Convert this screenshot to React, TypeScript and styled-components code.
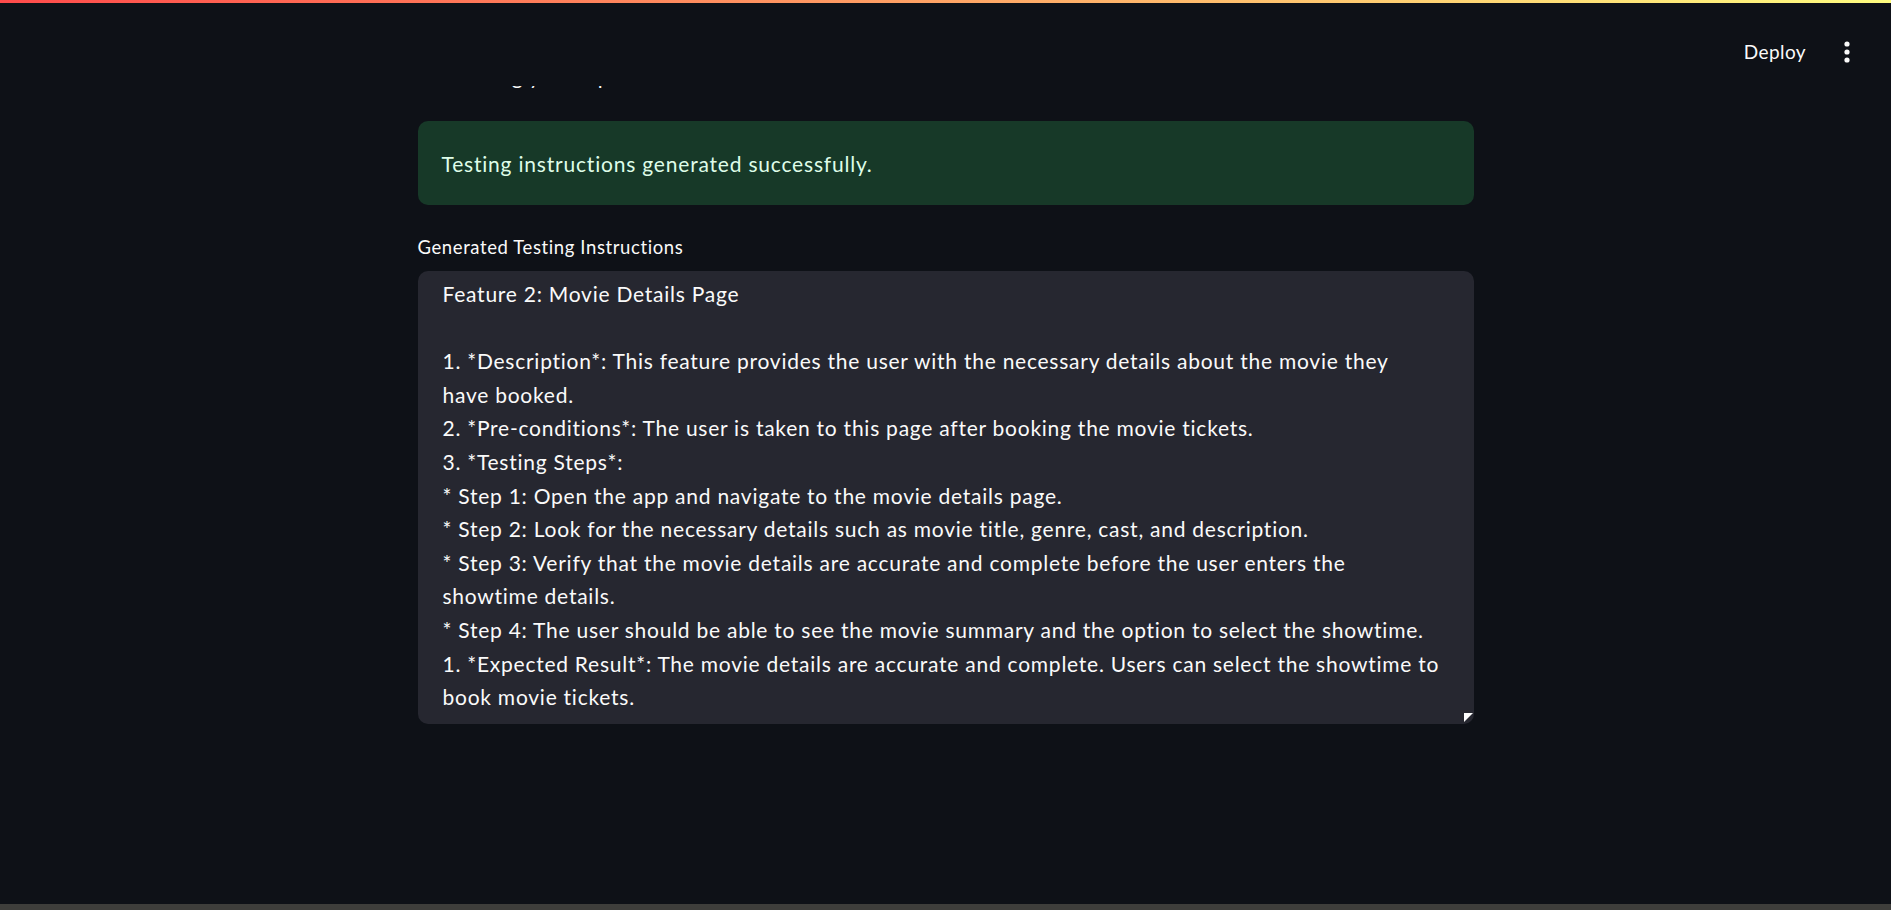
import React from "react";
import styled, { createGlobalStyle } from "styled-components";

const GlobalStyle = createGlobalStyle`
  html, body {
    margin: 0;
    padding: 0;
    background: #0e1117;
    color: #fafafa;
    font-family: Lato, "Noto Sans", sans-serif;
  }
  * { box-sizing: border-box; }
`;

const instructions = `Feature 2: Movie Details Page

1. *Description*: This feature provides the user with the necessary details about the movie they
have booked.
2. *Pre-conditions*: The user is taken to this page after booking the movie tickets.
3. *Testing Steps*:
* Step 1: Open the app and navigate to the movie details page.
* Step 2: Look for the necessary details such as movie title, genre, cast, and description.
* Step 3: Verify that the movie details are accurate and complete before the user enters the
showtime details.
* Step 4: The user should be able to see the movie summary and the option to select the showtime.
1. *Expected Result*: The movie details are accurate and complete. Users can select the showtime to
book movie tickets.`;

export default function App() {
  return (
    <>
      <GlobalStyle />
      <Page>
        <Header>
          <Decoration />
          <Toolbar>
            <DeployButton>Deploy</DeployButton>
            <MenuButton aria-label="Main menu">
              <svg width="8" height="22" viewBox="0 0 8 22">
                <circle cx="4" cy="3" r="2.6" fill="#fafafa" />
                <circle cx="4" cy="11" r="2.6" fill="#fafafa" />
                <circle cx="4" cy="19" r="2.6" fill="#fafafa" />
              </svg>
            </MenuButton>
          </Toolbar>
        </Header>
        <Main>
          <Block>
            <ScrolledText>Processing your input...</ScrolledText>
            <SuccessAlert>Testing instructions generated successfully.</SuccessAlert>
            <Label>Generated Testing Instructions</Label>
            <TextAreaBox>
              <TextArea readOnly wrap="off" value={instructions} />
              <ResizeHandle width="9" height="9" viewBox="0 0 9 9">
                <polygon points="0,0 9,0 0,9" fill="#ffffff" />
              </ResizeHandle>
            </TextAreaBox>
          </Block>
        </Main>
        <BottomBar />
      </Page>
    </>
  );
}

const Page = styled.div`
  height: 100vh;
  display: flex;
  flex-direction: column;
  overflow: hidden;
`;

const Header = styled.header`
  position: fixed;
  top: 0;
  left: 0;
  right: 0;
  height: 86px;
  background: #0e1117;
  z-index: 10;
`;

const Decoration = styled.div`
  height: 3px;
  background: linear-gradient(90deg, #ff4b4b, #fffd80);
`;

const Toolbar = styled.div`
  display: flex;
  justify-content: flex-end;
  align-items: center;
  gap: 35px;
  height: 83px;
  padding: 14px 38px 0 0;
`;

const DeployButton = styled.button`
  background: none;
  border: none;
  color: #fafafa;
  font-family: inherit;
  font-size: 19px;
  letter-spacing: 0.4px;
  padding: 0;
  cursor: pointer;
`;

const MenuButton = styled.button`
  background: none;
  border: none;
  padding: 0 2px;
  display: flex;
  cursor: pointer;
`;

const Main = styled.main`
  flex: 1;
  display: flex;
  justify-content: center;
  padding-top: 58px;
`;

const Block = styled.div`
  width: 1056px;
  display: flex;
  flex-direction: column;
`;

const ScrolledText = styled.p`
  margin: 0 0 27px;
  font-size: 21px;
  line-height: 36px;
  letter-spacing: 0.75px;
`;

const SuccessAlert = styled.div`
  height: 84px;
  display: flex;
  align-items: center;
  padding: 0 24px;
  border-radius: 10px;
  background: #173928;
  color: #dffde9;
  font-size: 21px;
  letter-spacing: 0.8px;
`;

const Label = styled.label`
  margin: 28px 0 10px;
  font-size: 18.5px;
  line-height: 28px;
  letter-spacing: 0.6px;
  color: #fafafa;
`;

const TextAreaBox = styled.div`
  position: relative;
  height: 453px;
  border-radius: 10px;
  background: #262730;
  overflow: hidden;
`;

const TextArea = styled.textarea`
  display: block;
  width: 100%;
  height: 100%;
  padding: 6px 25px 10px;
  border: none;
  outline: none;
  resize: none;
  overflow: hidden;
  background: transparent;
  color: #fafafa;
  font-family: inherit;
  font-size: 21px;
  line-height: 33.6px;
  letter-spacing: 0.75px;
  white-space: pre;
`;

const ResizeHandle = styled.svg`
  position: absolute;
  right: 1px;
  bottom: 2px;
`;

const BottomBar = styled.div`
  height: 6px;
  background: #3e3e3b;
`;
